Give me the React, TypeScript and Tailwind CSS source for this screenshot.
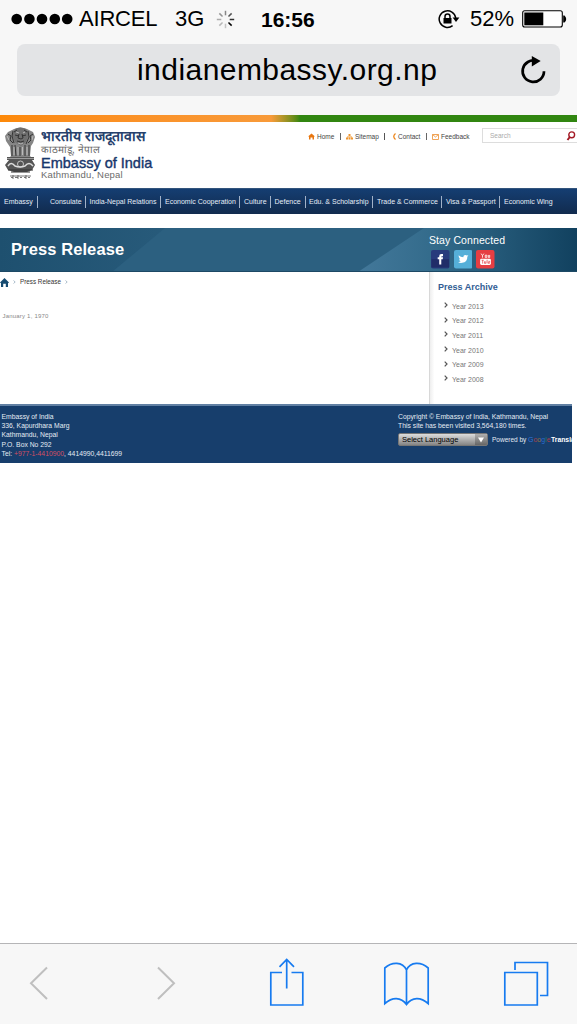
import React from "react";

const navItems: { label: string; cell: string; pad: string }[] = [
  { label: "Embassy", cell: "w-[38px]", pad: "pl-[4px]" },
  { label: "Consulate", cell: "w-[48px]", pad: "pl-[12px]" },
  { label: "India-Nepal Relations", cell: "w-[75px]", pad: "pl-[3.5px]" },
  { label: "Economic Cooperation", cell: "w-[79px]", pad: "pl-[4px]" },
  { label: "Culture", cell: "w-[31px]", pad: "pl-[4px]" },
  { label: "Defence", cell: "w-[35px]", pad: "pl-[3.5px]" },
  { label: "Edu. & Scholarship", cell: "w-[67px]", pad: "pl-[3px]" },
  { label: "Trade & Commerce", cell: "w-[69px]", pad: "pl-[4px]" },
  { label: "Visa & Passport", cell: "w-[58px]", pad: "pl-[4px]" },
  { label: "Economic Wing", cell: "w-[77px]", pad: "pl-[4px]" },
];

const years = ["Year 2013", "Year 2012", "Year 2011", "Year 2010", "Year 2009", "Year 2008"];

function Spinner() {
  const rays = [0.45, 0.65, 0.8, 1, 0.2, 0.25, 0.3, 0.4];
  return (
    <svg className="ml-[13px] size-[19px]" viewBox="0 0 19 19" stroke="#000" strokeWidth="1.5">
      {rays.map((o, i) => (
        <path key={i} d="M9.5 .8V5.3" opacity={o} transform={`rotate(${i * 45} 9.5 9.5)`} />
      ))}
    </svg>
  );
}

function StatusBar() {
  return (
    <div className="flex h-[38px] items-center text-[22px] leading-none">
      <svg className="ml-[11px] h-[12px] w-[62px]" viewBox="0 0 62 12">
        {[5.7, 18.4, 31, 43.8, 56.2].map((x) => <circle key={x} cx={x} cy="6" r="5.3" />)}
      </svg>
      <span className="ml-[6px] w-[96px] tracking-[-0.2px]">AIRCEL</span>
      <span className="w-[28px]">3G</span>
      <Spinner />
      <span className="ml-[26px] w-[177px] text-[21px] font-bold">16:56</span>
      <svg className="h-[20px] w-[22px]" viewBox="0 0 22 20" fill="none" stroke="#000" strokeWidth="1.5">
        <path d="M14.6 16.6A8.3 8.3 0 1 1 17.7 9" />
        <path d="M14.6 8.6h6.8L18 13z" fill="#000" stroke="none" />
        <path d="M5.5 9h8v5.5h-8z" fill="#000" stroke="none" />
        <path d="M7 9V7.4a2.5 2.5 0 0 1 5 0V9" />
      </svg>
      <span className="ml-[10px] w-[52px] text-[22px]">52%</span>
      <svg className="h-[18px] w-[45px]" viewBox="0 0 45 18">
        <rect x=".7" y=".8" width="39.6" height="16.2" rx="2" fill="#fff" stroke="#000" strokeWidth="1.1" />
        <path d="M2.3 2.5h19v12.8h-19z" />
        <path d="M41.2 5.5h1.3q1.7 1.5 1.7 3.5t-1.7 3.5h-1.3z" />
      </svg>
    </div>
  );
}

function AddressBar() {
  return (
    <div className="mx-[17px] mt-[6px] flex h-[52px] items-center rounded-[8px] bg-[#e3e4e6]">
      <span className="ml-[120px] w-[382px] whitespace-nowrap text-[30px] leading-none tracking-[0.45px]">indianembassy.org.np</span>
      <svg className="size-[28px]" viewBox="0 0 28 28">
        <path d="M17.5 5A10.7 10.7 0 1 0 25 15.2" fill="none" stroke="#000" strokeWidth="2.7" />
        <path d="M12.8 0v10.5L21.7 5z" />
      </svg>
    </div>
  );
}

function Emblem() {
  return (
    <svg className="ml-[5px] mt-[5px] h-[53px] w-[31px]" viewBox="0 0 31 53" fill="none">
      <path d="M9 2Q15.500-1 22 2L28 5 30 10 28 16 26 19 25 29 27 31H4L6 29 5 20 1 14 0 9 3 5Z" fill="#858585" />
      <path d="M10 2q5-3 11 0l3 5-3 8-5 4-6-4-3-7z" fill="#6f6f6f" />
      <path d="M9 5l3-2M19 3l3 2M10 8l4 1M17 9l4-1M14 7l-1 4 3 1 2-1-1-4M12 14q4 2 7 0M8 4L7 9l2 7M23 4l1 6-3 7M3 7l3 2-1 4 3 3M28 7l-3 2 1 4-3 3M10 18l1 11M15 20v9M20 18v11M7 18v11M24 18v11" stroke="#343434" strokeWidth="1" />
      <path d="M11 5l3 1M18 6l2-1M13 16l3 1 2-1M9 20v8M13 20v8M17.500 20v8M22 20v8M2 9l2 4M28 9l-1 4" stroke="#c9c9c9" strokeWidth=".8" />
      <path d="M2 30h27v3H2zM4 33h23l3 5-3 5-5 2H9l-6-2-3-5z" fill="#555" />
      <path d="M2 31.5h27" stroke="#bbb" strokeWidth=".7" />
      <path d="M3 39q3-5 7 0 5 2 10 0 4-5 8 0" stroke="#ddd" strokeWidth="1.5" />
      <circle cx="15.500" cy="37" r="3" stroke="#ddd" strokeWidth=".8" />
      <path d="M3 43h25M6 45h19" stroke="#333" strokeWidth="1" />
      <path d="M5 49h21M6 50.500h2M10 50.500h3M15 50.500h2M19 50.500h2M23 50.500h2M8 48v4M13 48v4M21 48v4" stroke="#555" strokeWidth=".8" />
    </svg>
  );
}

function Masthead() {
  return (
    <div className="flex h-[66px]">
      <Emblem />
      <div className="ml-[5px] w-[125px] whitespace-nowrap pt-[6px]">
        <p className="h-[16px] text-[14px] font-bold leading-[16px] text-[#26416c]">भारतीय राजदूतावास</p>
        <p className="h-[12px] text-[10px] leading-[12px] text-[#666]">काठमांडू, नेपाल</p>
        <p className="h-[14px] text-[14.500px] leading-[14px] text-[#17366b] [-webkit-text-stroke:0.4px_#17366b]">Embassy of India</p>
        <p className="h-[10px] text-[9.500px] leading-[10px] tracking-[0.2px] text-[#6b6b6b]">Kathmandu, Nepal</p>
      </div>
      <div className="ml-[142px] mt-[9px] flex h-[11px] items-center text-[6.500px] text-[#444]">
        <svg className="mr-[2px] size-[7px]" viewBox="0 0 7 7" fill="#e87710"><path d="M0 3.500L3.500.5 7 3.500H6V6.500H4.500V4.500H2.500V6.500H1V3.500z" /></svg>
        <span className="w-[23px]">Home</span>
        <i className="h-[7px] w-px bg-[#666]" />
        <svg className="ml-[5px] mr-[2px] size-[7px]" viewBox="0 0 7 7" fill="#f0952e"><path d="M2.500 1h2v2h-2zM0 4.500h2v2H0zM2.500 4.500h2v2h-2zM5 4.500h2v2H5zM1 3.500h5v.7H1z" /></svg>
        <span className="w-[29px]">Sitemap</span>
        <i className="h-[7px] w-px bg-[#555]" />
        <svg className="ml-[7px] mr-[2px] h-[7px] w-[4px]" viewBox="0 0 4 7"><path d="M3.500.5Q0 3.500 3.500 6.500" fill="none" stroke="#ee861a" strokeWidth="1.3" /></svg>
        <span className="w-[28px]">Contact</span>
        <i className="h-[7px] w-px bg-[#666]" />
        <svg className="ml-[5px] mr-[2px] h-[6px] w-[7px]" viewBox="0 0 7 6" fill="none" stroke="#ee9a45" strokeWidth=".9"><path d="M.5.5h6v5h-6zL3.500 3 6.500.5" /></svg>
        <span>Feedback</span>
      </div>
      <div className="ml-auto mt-[6px] flex h-[15px] w-[95px] items-center border border-r-0 border-[#ddd]">
        <span className="ml-[7px] text-[6.500px] text-[#aaa]">Search</span>
        <svg className="ml-auto mr-px size-[10px]" viewBox="0 0 10 10" fill="none" stroke="#a31925"><circle cx="5.700" cy="3.800" r="2.900" strokeWidth="1.400" /><path d="M3.800 6L1.500 9" strokeWidth="2" /></svg>
      </div>
    </div>
  );
}

function Nav() {
  return (
    <nav className="flex h-[26px] items-center border-t border-[#32547c] bg-linear-to-b from-[#153e72] to-[#112b4e] text-[7px] leading-none text-[#e6edf6]">
      {navItems.map((n, i) => (
        <div key={n.label} className={`flex h-[12px] shrink-0 items-center whitespace-nowrap ${n.cell} ${n.pad} ${i < 9 ? "border-r border-[#a2b2c8]" : ""}`}>{n.label}</div>
      ))}
    </nav>
  );
}

function Banner() {
  return (
    <div className="relative mt-[14px] flex h-[44px] bg-[#265877] text-white">
      <svg className="absolute inset-0 h-[44px] w-[577px]" viewBox="0 0 577 44">
        <defs>
          <linearGradient id="base"><stop stopColor="#1e506f" /><stop offset=".3" stopColor="#285b7b" /><stop offset=".7" stopColor="#285a7b" /></linearGradient>
          <linearGradient id="shine"><stop stopColor="#43789a" /><stop offset=".35" stopColor="#336b8b" /><stop offset="1" stopColor="#11415f" /></linearGradient>
        </defs>
        <path d="M0 0h577v44H0z" fill="url(#base)" />
        <path d="M165 0h260v44H112z" fill="#2c6080" />
        <path d="M424 0h153v44H358z" fill="url(#shine)" />
        <path d="M0 43.500h577" stroke="#1d4965" />
      </svg>
      <h1 className="relative ml-[11px] mt-[10px] w-[418px] text-[16.500px] font-bold leading-[22px] tracking-[0.1px]">Press Release</h1>
      <div className="relative">
        <p className="mt-[5px] h-[14px] text-[10.500px] leading-[14px] tracking-[0.1px]">Stay Connected</p>
        <div className="ml-[2px] mt-[3px] flex gap-[4px]">
          <svg className="size-[18.500px]" viewBox="0 0 18 18"><rect width="18" height="18" rx="2" fill="#273b7c" /><path d="M.5 9h17v8H.5z" fill="#202d68" /><path d="M8 14V9H6.500V7H8V5.800Q8 4 10 4h1.700v2h-1Q10 6 10 6.700V7h1.700l-.3 2H10v5z" fill="#fff" /></svg>
          <svg className="size-[18.500px]" viewBox="0 0 18 18"><rect width="18" height="18" rx="2" fill="#55afd8" /><path d="M4.500 5q2 2 4.500 2 .2-2.200 2-2.200 1 0 1.500.6l1.500-.2-1 1.300q0 5.500-5 6Q5.500 13 4 11.600q1.700.1 2.500-.7Q5 10.500 5 9h.8Q4.300 7 4.500 5z" fill="#fff" /></svg>
          <svg className="size-[18.500px]" viewBox="0 0 18 18"><rect width="18" height="18" rx="2" fill="#e63e43" /><path d="M5 3.500l1.300 2v2M7.700 3.500l-1.400 2M9 5h1.500v2.200H9zM12 4.800v2.400h1.300V4.800" fill="none" stroke="#fff" strokeWidth=".8" /><rect x="4" y="8.500" width="10.500" height="6" rx="1.300" fill="#fff" /><path d="M5.500 10h2M6.500 10v3.300M8.300 11v2h1.200v-2M10.800 9.500v3.500M12 11h1.300v1H12v1h1.300" fill="none" stroke="#e63e43" strokeWidth=".7" /></svg>
        </div>
      </div>
    </div>
  );
}

function Chevron({ cls, color, w }: { cls: string; color: string; w: number }) {
  return <svg className={cls} viewBox="0 0 4 6" fill="none" stroke={color} strokeWidth={w}><path d="M.7.700L3 3 .7 5.300" /></svg>;
}

function Content() {
  return (
    <div className="flex h-[132px]">
      <div className="w-[429px]">
        <div className="mt-[4px] flex h-[12px] items-center text-[6.300px] text-[#333]">
          <svg className="h-[9px] w-[9px]" viewBox="0 0 9 9" fill="#164b70"><path d="M0 4.500L4.500 0 9 4.500 8 5.300V9H5.800V5.800H3.200V9H1V5.300z" /></svg>
          <Chevron cls="ml-[4px] mr-[4px] h-[4px] w-[3px]" color="#7794aa" w={1} />
          <span className="w-[45px] whitespace-nowrap">Press Release</span>
          <Chevron cls="h-[4px] w-[3px]" color="#7794aa" w={1} />
        </div>
        <p className="ml-[2.500px] mt-[23px] text-[6px] leading-[10px] tracking-[0.2px] text-[#888]">January 1, 1970</p>
      </div>
      <aside className="flex-1 border-l border-[#d8d8d8] bg-linear-to-r from-[#eee] to-white to-3%">
        <h2 className="ml-[8px] mt-[9px] h-[12px] text-[9px] font-bold leading-[12px] text-[#315d94]">Press Archive</h2>
        <ul className="ml-[14px] mt-[6px]">
          {years.map((y) => (
            <li key={y} className="flex h-[14.600px] items-center text-[7px] leading-none text-[#777]">
              <Chevron cls="mb-[2px] mr-[4px] h-[6px] w-[4px]" color="#555" w={1.2} />{y}
            </li>
          ))}
        </ul>
      </aside>
    </div>
  );
}

function Footer() {
  return (
    <footer className="mr-[5px] flex h-[59px] overflow-hidden border-t-2 border-[#6180a3] bg-[#173e6c] text-[6.800px] leading-[9.200px] text-[#e4ebf3]">
      <div className="w-[398px] shrink-0 pl-[1.500px] pt-[6px]">
        <p>Embassy of India</p><p>336, Kapurdhara Marg</p><p>Kathmandu, Nepal</p><p>P.O. Box No 292</p>
        <p>Tel: <span className="text-[#d44e63]">+977-1-4410900</span>, 4414990,4411699</p>
      </div>
      <div className="shrink-0 whitespace-nowrap pt-[6px]">
        <p>Copyright © Embassy of India, Kathmandu, Nepal</p><p>This site has been visited 3,564,180 times.</p>
        <div className="mt-[3px] flex items-center">
          <div className="flex h-[13px] w-[90px] items-center overflow-hidden rounded-[2px] border border-[#777] bg-linear-to-b from-[#ddd] to-[#858585] text-[7.500px] leading-none text-black">
            <span className="ml-[3px] flex-1">Select Language</span>
            <span className="flex h-full w-[12px] items-center justify-center bg-linear-to-b from-[#b0b0b0] to-[#666]"><svg className="size-[6px]" viewBox="0 0 6 6" fill="#fff"><path d="M0 .5h6L3 5.500z" /></svg></span>
          </div>
          <span className="ml-[4px] w-[36px] text-[6.500px]">Powered by</span>
          <span className="w-[23px] text-[7px]"><b className="font-normal text-[#3474da]">G</b><b className="font-normal text-[#a83e50]">o</b><b className="font-normal text-[#8d7840]">o</b><b className="font-normal text-[#286bd0]">g</b><b className="font-normal text-[#258467]">l</b><b className="font-normal text-[#a83e50]">e</b></span>
          <span className="font-bold text-white">Translate</span>
        </div>
      </div>
    </footer>
  );
}

function Toolbar() {
  return (
    <div className="mt-auto flex h-[81px] items-start border-t border-[#b5b5b7] bg-[#f7f7f7]">
      <svg className="ml-[29px] mt-[22px] h-[34px] w-[19px]" viewBox="0 0 19 34" fill="none" stroke="#bfbfbf" strokeWidth="2"><path d="M18 1.500L2 17.300 18 33" /></svg>
      <svg className="ml-[109px] mt-[22px] h-[34px] w-[19px]" viewBox="0 0 19 34" fill="none" stroke="#bfbfbf" strokeWidth="2"><path d="M1 1.500L17 17.300 1 33" /></svg>
      <svg className="ml-[93px] mt-[13px] h-[50px] w-[36px]" viewBox="0 0 36 50" fill="none" stroke="#177bf0" strokeWidth="1.700"><path d="M13 15.500H1.800V48h32V15.500H22.500M17.700 31.500V2.500M10.500 9.800L17.700 2.500 25 9.800" /></svg>
      <svg className="ml-[78px] mt-[17px] h-[46px] w-[47px]" viewBox="0 0 47 46" fill="none" stroke="#177bf0" strokeWidth="1.700"><path d="M23.500 9C19.500.5 9 .5 1.800 7V42.500C9 36 18 35.500 23.500 43.500 29 35.500 38 36 45.200 42.500V7C38 .5 27.500.5 23.500 9V43.500" /></svg>
      <svg className="ml-[73px] mt-[17px] h-[46px] w-[46px]" viewBox="0 0 46 46" fill="none" stroke="#177bf0" strokeWidth="1.700"><path d="M1.800 11.500h32.500V44H1.800zM12 9V1.500h32.500V34.500H37" /></svg>
    </div>
  );
}

export default function App() {
  return (
    <div className="flex h-[1024px] w-[577px] flex-col overflow-hidden bg-white font-['Liberation_Sans',Arial,sans-serif] text-black">
      <header className="h-[115px] shrink-0 bg-[#f7f7f7]"><StatusBar /><AddressBar /></header>
      <div className="h-[7px] shrink-0 bg-linear-to-r from-[#fd8908] from-0% via-[#f89a39] via-47% to-[#318610] to-52%" />
      <Masthead />
      <Nav />
      <Banner />
      <Content />
      <Footer />
      <Toolbar />
    </div>
  );
}
